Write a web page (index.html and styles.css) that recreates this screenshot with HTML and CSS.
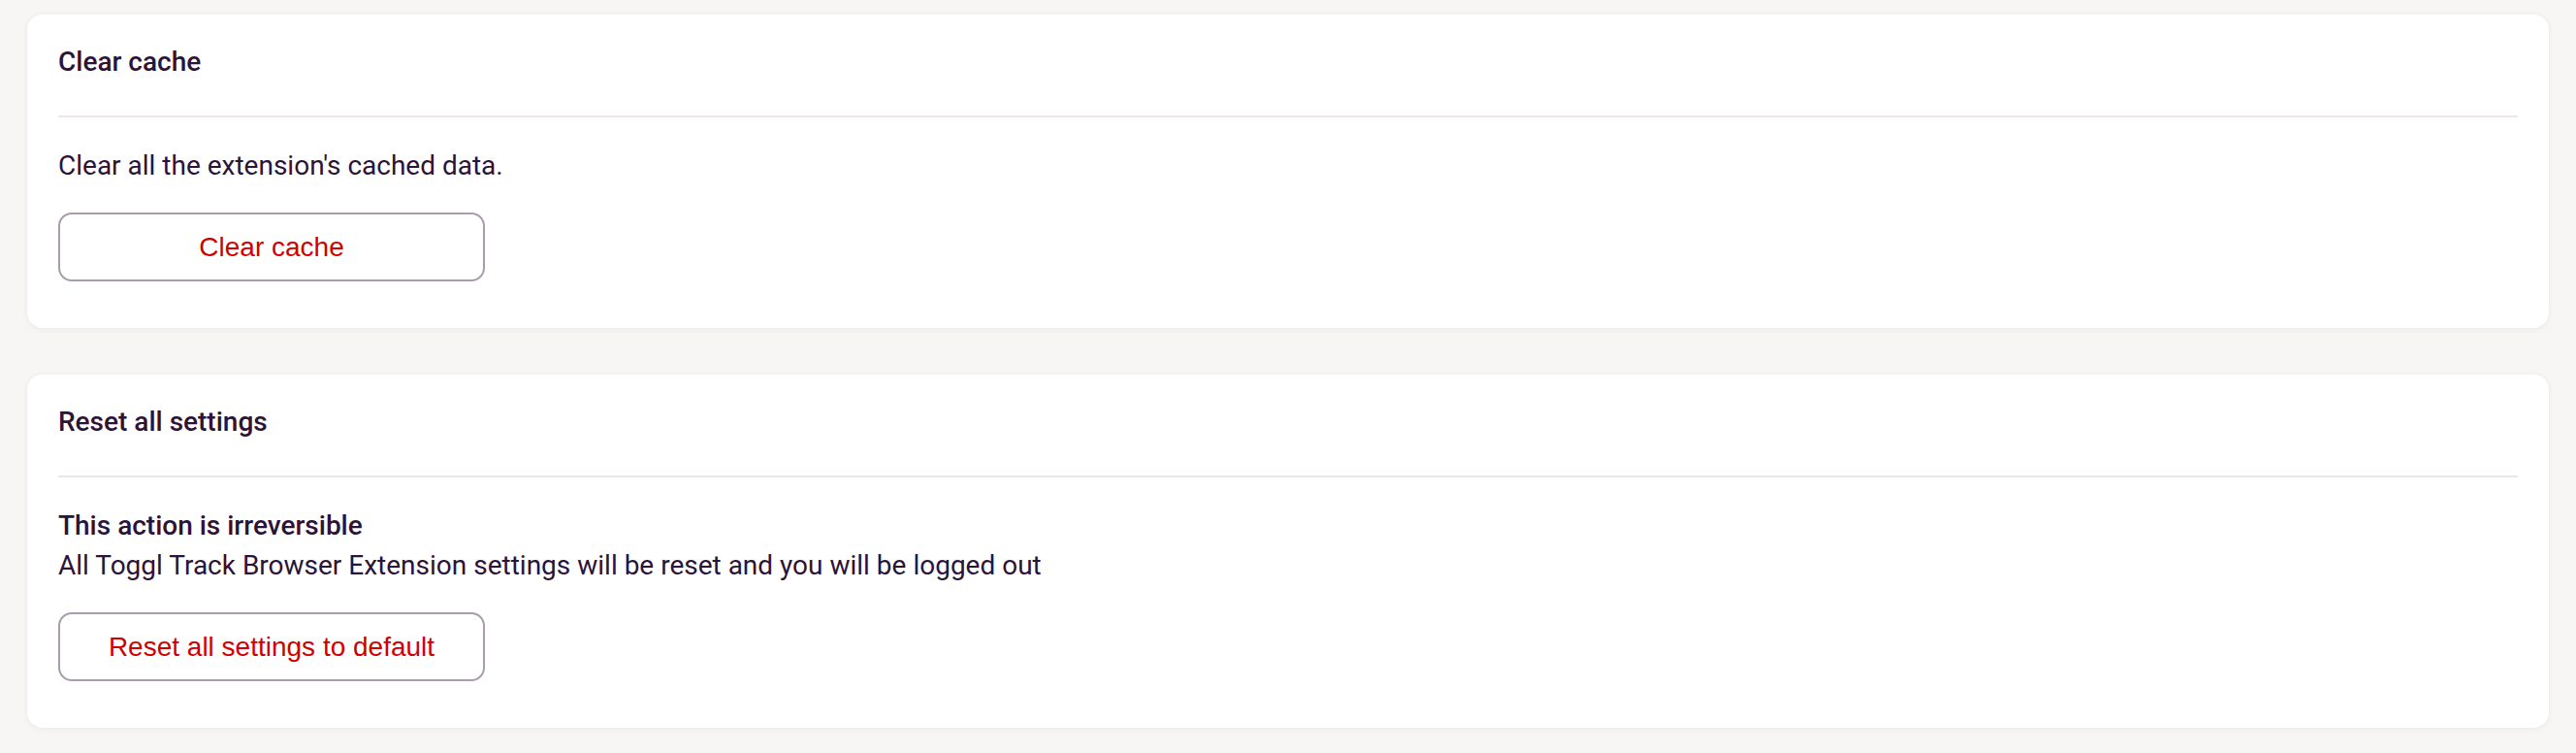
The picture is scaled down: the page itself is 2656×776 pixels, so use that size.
FILE: index.html
```
<!DOCTYPE html>
<html lang="en">
<head>
<meta charset="utf-8">
<title>Settings</title>
<link rel="stylesheet" href="styles.css">
</head>
<body>
<main class="page">
  <section class="card">
    <header class="card-header">
      <h2 class="card-title">Clear cache</h2>
    </header>
    <div class="card-body">
      <p class="text">Clear all the extension's cached data.</p>
      <button class="btn" type="button">Clear cache</button>
    </div>
  </section>
  <section class="card">
    <header class="card-header">
      <h2 class="card-title">Reset all settings</h2>
    </header>
    <div class="card-body">
      <p class="text text-strong">This action is irreversible</p>
      <p class="text">All Toggl Track Browser Extension settings will be reset and you will be logged out</p>
      <button class="btn" type="button">Reset all settings to default</button>
    </div>
  </section>
</main>
</body>
</html>
```
FILE: styles.css
```
html, body {
  margin: 0;
  padding: 0;
  background: #f8f6f5;
}
body {
  font-family: Roboto, "Noto Sans", Arial, sans-serif;
  color: #2c1338;
}
.page {
  display: flex;
  flex-direction: column;
  gap: 48px;
  padding: 15px 28px 26px;
}
.card {
  background: #ffffff;
  border-radius: 16px;
  box-shadow: 0 1px 6px rgba(44, 19, 56, 0.07);
  padding: 32px 32px 48px;
}
.card-header {
  padding-bottom: 38.5px;
  border-bottom: 2px solid #ece6e9;
}
.card-title {
  margin: 0;
  font-size: 28px;
  font-weight: 500;
  line-height: normal;
}
.card-body {
  display: flex;
  flex-direction: column;
  align-items: flex-start;
  padding-top: 33px;
}
.text {
  margin: 0;
  font-size: 28px;
  font-weight: 400;
  line-height: normal;
}
.text-strong {
  font-weight: 500;
  margin-bottom: 8px;
}
.btn {
  margin-top: 32.5px;
  width: 440px;
  height: 71px;
  background: #ffffff;
  border: 2px solid #a79dad;
  border-radius: 14px;
  color: #d10000;
  font-family: "Liberation Sans", Arial, sans-serif;
  font-size: 28px;
  padding: 0;
  cursor: pointer;
}
```
